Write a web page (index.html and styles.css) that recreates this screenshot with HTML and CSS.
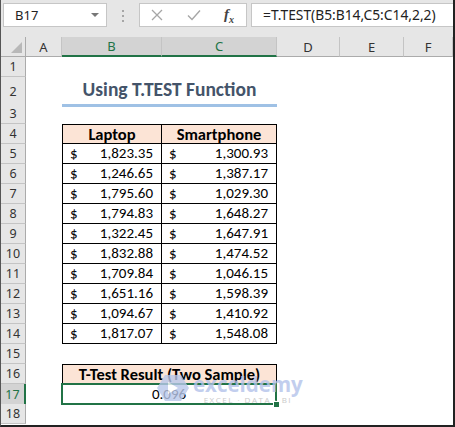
FILE: index.html
```html
<!DOCTYPE html>
<html>
<head>
    <meta charset="UTF-8">
    <title>T.TEST</title>
    <link rel="stylesheet" href="styles.css">
</head>
<body>
    <div class="window">
        <!-- formula bar -->
        <div class="formula-bar">
            <div class="name-box">
                <span>B17</span>
                <span class="drop"></span>
            </div>
            <div class="dots"><i></i><i></i><i></i></div>
            <div class="fx-buttons">
                <svg width="12" height="12" viewBox="0 0 12 12"><path d="M1 1 L11 11 M11 1 L1 11" stroke="#a6a6a6" stroke-width="1.3" fill="none"/></svg>
                <svg width="14" height="12" viewBox="0 0 14 12"><path d="M1 6.5 L5 10.5 L13 1.5" stroke="#a6a6a6" stroke-width="1.4" fill="none"/></svg>
                <span class="fx">f<sub>x</sub></span>
            </div>
            <div class="formula">=T.TEST(B5:B14,C5:C14,2,2)</div>
        </div>

        <!-- sheet -->
        <div class="sheet">
            <div class="row col-head">
                <div class="corner"><span class="tri"></span></div>
                <div>A</div>
                <div class="sel">B</div>
                <div class="sel">C</div>
                <div>D</div>
                <div>E</div>
                <div>F</div>
            </div>

            <div class="row"><div class="rh">1</div></div>
            <div class="row tall">
                <div class="rh">2</div>
                <div class="title">Using T.TEST Function</div>
            </div>
            <div class="row"><div class="rh">3</div></div>
            <div class="row">
                <div class="rh">4</div>
                <div class="cell head first">Laptop</div>
                <div class="cell head">Smartphone</div>
            </div>
            <div class="row">
                <div class="rh">5</div>
                <div class="cell money first"><span>$</span><span>1,823.35</span></div>
                <div class="cell money"><span>$</span><span>1,300.93</span></div>
            </div>
            <div class="row">
                <div class="rh">6</div>
                <div class="cell money first"><span>$</span><span>1,246.65</span></div>
                <div class="cell money"><span>$</span><span>1,387.17</span></div>
            </div>
            <div class="row">
                <div class="rh">7</div>
                <div class="cell money first"><span>$</span><span>1,795.60</span></div>
                <div class="cell money"><span>$</span><span>1,029.30</span></div>
            </div>
            <div class="row">
                <div class="rh">8</div>
                <div class="cell money first"><span>$</span><span>1,794.83</span></div>
                <div class="cell money"><span>$</span><span>1,648.27</span></div>
            </div>
            <div class="row">
                <div class="rh">9</div>
                <div class="cell money first"><span>$</span><span>1,322.45</span></div>
                <div class="cell money"><span>$</span><span>1,647.91</span></div>
            </div>
            <div class="row">
                <div class="rh">10</div>
                <div class="cell money first"><span>$</span><span>1,832.88</span></div>
                <div class="cell money"><span>$</span><span>1,474.52</span></div>
            </div>
            <div class="row">
                <div class="rh">11</div>
                <div class="cell money first"><span>$</span><span>1,709.84</span></div>
                <div class="cell money"><span>$</span><span>1,046.15</span></div>
            </div>
            <div class="row">
                <div class="rh">12</div>
                <div class="cell money first"><span>$</span><span>1,651.16</span></div>
                <div class="cell money"><span>$</span><span>1,598.39</span></div>
            </div>
            <div class="row">
                <div class="rh">13</div>
                <div class="cell money first"><span>$</span><span>1,094.67</span></div>
                <div class="cell money"><span>$</span><span>1,410.92</span></div>
            </div>
            <div class="row">
                <div class="rh">14</div>
                <div class="cell money first"><span>$</span><span>1,817.07</span></div>
                <div class="cell money"><span>$</span><span>1,548.08</span></div>
            </div>
            <div class="row"><div class="rh">15</div></div>
            <div class="row">
                <div class="rh">16</div>
                <div class="cell result-head">T-Test Result (Two Sample)</div>
            </div>
            <div class="row">
                <div class="rh active">17</div>
                <div class="cell result">0.096<span class="handle"></span></div>
            </div>
            <div class="row"><div class="rh">18</div></div>
        </div>

        <!-- watermark -->
        <div class="watermark">
            <svg width="34" height="30" viewBox="0 0 34 30">
                <path d="M9 2 L25 2 L33 15 L25 28 L9 28 L1 15 Z" fill="#b9c8ea"/>
                <path d="M12 9 L22 15 L12 21 Z" fill="#ffffff"/>
            </svg>
            <div class="wm-text">
                <span class="wm-name">exceldemy</span>
                <span class="wm-sub">EXCEL · DATA · BI</span>
            </div>
        </div>
    </div>
</body>
</html>
```

FILE: styles.css
```css
body {
    margin: 0;
    background: #fff;
}
.window {
    position: relative;
    width: 455px;
    height: 427px;
    box-sizing: border-box;
    border-left: 1px solid #555;
    border-right: 2px solid #222;
    border-bottom: 2px solid #222;
    overflow: hidden;
    background: #fff;
    font-family: "Carlito", "Lato", sans-serif;
    font-size: 14.5px;
    color: #000;
}

/* formula bar */
.formula-bar {
    display: flex;
    align-items: flex-start;
    height: 37px;
    padding-top: 3px;
    box-sizing: border-box;
    background: #e6e6e6;
    font-family: "Noto Sans", "Open Sans", sans-serif;
}
.name-box {
    display: flex;
    align-items: center;
    justify-content: space-between;
    width: 104px;
    height: 24px;
    margin-left: 2px;
    padding: 0 7px 0 11px;
    box-sizing: border-box;
    background: #fff;
    border: 1px solid #c6c6c6;
    font-size: 13px;
    color: #222;
}
.drop {
    width: 0;
    height: 0;
    border-left: 4px solid transparent;
    border-right: 4px solid transparent;
    border-top: 4px solid #777;
}
.dots {
    display: flex;
    flex-direction: column;
    align-items: center;
    gap: 3px;
    width: 32px;
    padding-top: 7px;
}
.dots i {
    width: 2px;
    height: 2px;
    background: #a6a6a6;
}
.fx-buttons {
    display: flex;
    align-items: center;
    justify-content: space-between;
    width: 108px;
    height: 24px;
    padding: 0 12px 0 11px;
    box-sizing: border-box;
    background: #fff;
    border: 1px solid #c6c6c6;
}
.fx {
    font-family: "Liberation Serif", serif;
    font-style: italic;
    font-weight: bold;
    font-size: 15px;
    color: #444;
}
.fx sub {
    font-size: 10px;
}
.formula {
    flex: 1;
    height: 24px;
    margin-left: 4px;
    padding-left: 11px;
    box-sizing: border-box;
    background: #fff;
    border: 1px solid #c6c6c6;
    border-right: none;
    font-size: 13.8px;
    line-height: 22px;
    color: #222;
}

/* sheet grid */
.row {
    display: grid;
    grid-template-columns: 25px 36px 100px 115px 63px 64px 1fr;
    height: 20px;
}
.row.tall {
    height: 27px;
}
.col-head {
    background: #e6e6e6;
    font-family: "Noto Sans", "Open Sans", sans-serif;
    font-size: 13px;
    color: #333;
}
.col-head div {
    display: flex;
    align-items: center;
    justify-content: center;
    box-sizing: border-box;
    border-right: 1px solid #c4c4c4;
    border-bottom: 1px solid #ababab;
}
.col-head .corner {
    position: relative;
    border-right: 1px solid #ababab;
}
.corner .tri {
    position: absolute;
    right: 3px;
    bottom: 3px;
    width: 0;
    height: 0;
    border-left: 11px solid transparent;
    border-bottom: 11px solid #b8b8b8;
}
.col-head .sel {
    background: #d3d3d3;
    color: #217346;
    border-bottom: 2px solid #217346;
}
.rh {
    display: flex;
    align-items: center;
    justify-content: center;
    box-sizing: border-box;
    background: #e6e6e6;
    border-right: 1px solid #ababab;
    border-bottom: 1px solid #c4c4c4;
    font-family: "Noto Sans", "Open Sans", sans-serif;
    font-size: 12.5px;
    color: #333;
}
.rh.active {
    background: #d3d3d3;
    color: #217346;
    border-right: 2px solid #217346;
}

/* cells */
.title {
    grid-column: 3 / 5;
    display: flex;
    align-items: flex-end;
    justify-content: center;
    padding-bottom: 3px;
    box-sizing: border-box;
    border-bottom: 3px solid #9fc1e5;
    font-weight: bold;
    font-size: 19.5px;
    color: #44546a;
}
.cell {
    box-sizing: border-box;
    border-right: 1px solid #000;
    border-bottom: 1px solid #000;
    line-height: 19px;
}
.cell.first {
    grid-column: 3;
    border-left: 1px solid #000;
}
.cell.head {
    background: #fce4d6;
    border-top: 1px solid #000;
    text-align: center;
    font-weight: bold;
    font-size: 16.5px;
    line-height: 18px;
}
.cell.money {
    display: flex;
    justify-content: space-between;
    padding: 0 8px 0 7px;
    font-size: 15px;
}
.result-head {
    grid-column: 3 / 5;
    background: #fce4d6;
    border: 1px solid #000;
    text-align: center;
    font-weight: bold;
    font-size: 16.5px;
    line-height: 18px;
}
.result {
    position: relative;
    grid-column: 3 / 5;
    margin-left: -1px;
    margin-top: -1px;
    height: 22px;
    border: 2px solid #217346;
    text-align: center;
    font-size: 15px;
    line-height: 18px;
}
.handle {
    position: absolute;
    right: -5px;
    bottom: -5px;
    width: 5px;
    height: 5px;
    background: #217346;
    border: 1px solid #fff;
}

/* watermark */
.watermark {
    position: absolute;
    left: 155px;
    top: 373px;
    display: flex;
    align-items: flex-start;
    gap: 3px;
    opacity: 0.8;
    pointer-events: none;
}
.wm-text {
    display: flex;
    flex-direction: column;
    align-items: center;
}
.wm-name {
    font-family: "Open Sans", sans-serif;
    font-weight: bold;
    font-size: 20.5px;
    line-height: 22px;
    color: #b3c3ea;
}
.wm-sub {
    font-family: "Open Sans", sans-serif;
    font-size: 8px;
    line-height: 10px;
    letter-spacing: 1.5px;
    color: #bdbdbd;
}
```
